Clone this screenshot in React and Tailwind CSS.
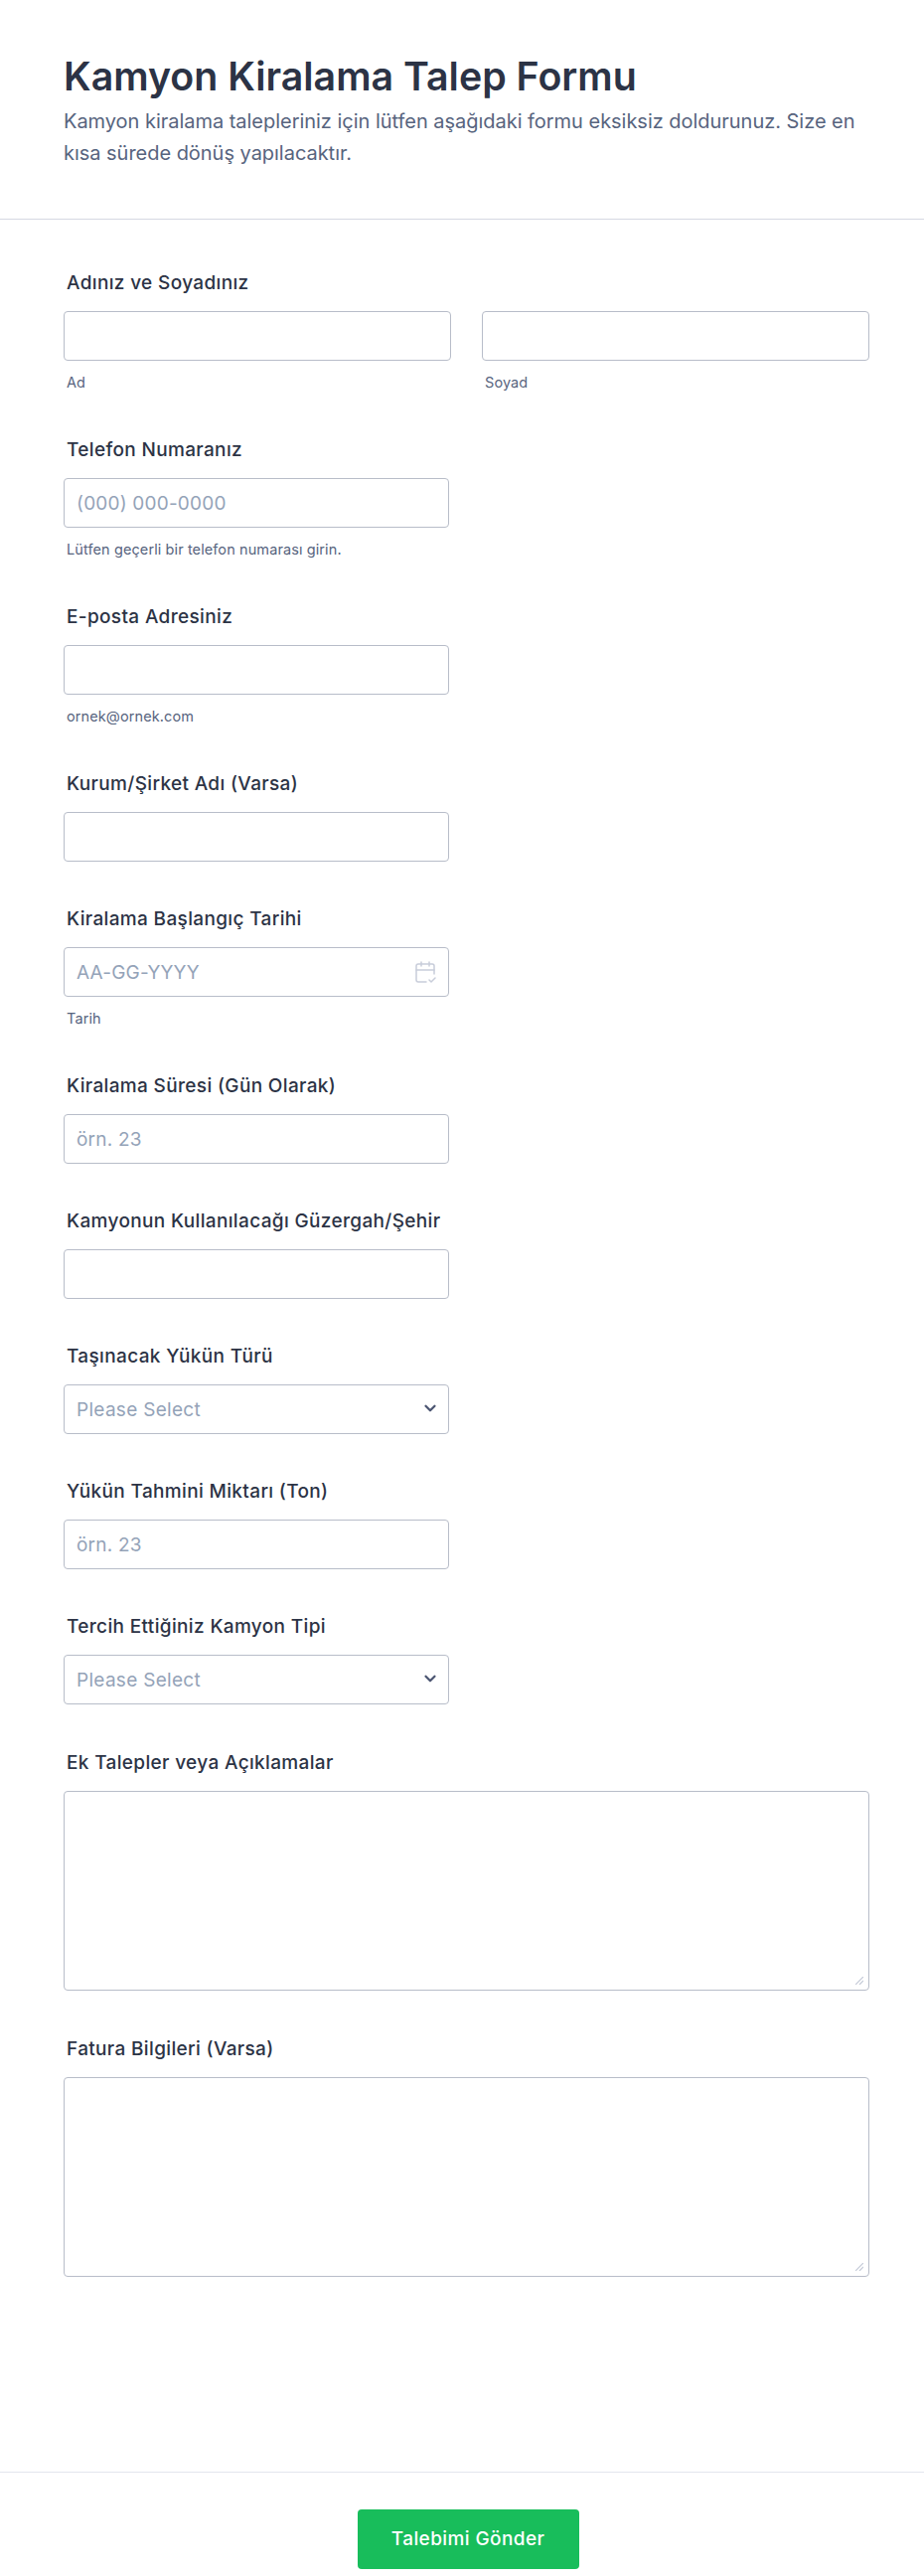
import React from 'react';
import { CalendarCheck2, ChevronDown } from 'lucide-react';

const inputClass = "w-full h-[50px] px-[12px] bg-white border border-[#b8bdc9] rounded-[4px] text-[19px] tracking-[0.2px] text-[#2c3345] placeholder:text-[#94a3b8] outline-none";
const areaClass = 'block w-full h-[201px] bg-white border border-[#b8bdc9] rounded-[4px] outline-none resize-none';

const Label = ({ children }) => (
  <label className="block pl-[3px] mb-[16px] h-[24px] text-[19px] tracking-[0.35px] leading-[24px] font-medium text-[#2c3345]">{children}</label>
);

const Sub = ({ children }) => (
  <p className="pl-[3px] mt-[13px] h-[18px] text-[14.5px] tracking-[0.1px] leading-[18px] text-[#57647e]">{children}</p>
);

const SelectBox = () => (
  <div className="relative w-[388px]">
    <select defaultValue="" className={`${inputClass} pt-[2px] tracking-[0.3px] appearance-none text-[#94a3b8]`}>
      <option value="">Please Select</option>
    </select>
    <ChevronDown size={18} strokeWidth={3} className="absolute right-[10px] top-[15px] text-[#4c5672]" />
  </div>
);

const TextArea = () => (
  <div className="relative">
    <textarea className={areaClass} />
    <svg width="8" height="8" viewBox="0 0 8 8" className="absolute right-[6px] bottom-[6px] text-[#c3c9d6]" stroke="currentColor" strokeWidth="1.2">
      <path d="M0 8 L8 0 M4 8 L8 4" />
    </svg>
  </div>
);

const App = () => {
  return (
    <div className="w-[930px] h-[2592px] bg-white font-['Inter',sans-serif] flex flex-col">
      <header className="h-[221px] px-[64px] pt-[49px] border-b border-[#d5d8e2]">
        <h1 className="text-[39.3px] leading-[56px] font-semibold text-[#2c3345]">Kamyon Kiralama Talep Formu</h1>
        <p className="mt-[1px] text-[20px] leading-[32px] tracking-[-0.03px] text-[#57647e]">
          Kamyon kiralama talepleriniz için lütfen aşağıdaki formu eksiksiz doldurunuz. Size en kısa sürede dönüş yapılacaktır.
        </p>
      </header>

      <form className="flex-1 px-[64px] pt-[52px]">
        <div className="h-[168px]">
          <Label>Adınız ve Soyadınız</Label>
          <div className="grid grid-cols-2 gap-[31px] w-[811px]">
            <div>
              <input className={inputClass} />
              <Sub>Ad</Sub>
            </div>
            <div>
              <input className={inputClass} />
              <Sub>Soyad</Sub>
            </div>
          </div>
        </div>

        <div className="h-[168px] w-[388px]">
          <Label>Telefon Numaranız</Label>
          <input className={inputClass} placeholder="(000) 000-0000" />
          <Sub>Lütfen geçerli bir telefon numarası girin.</Sub>
        </div>

        <div className="h-[168px] w-[388px]">
          <Label>E-posta Adresiniz</Label>
          <input className={inputClass} />
          <Sub>ornek@ornek.com</Sub>
        </div>

        <div className="h-[136px] w-[388px]">
          <Label>Kurum/Şirket Adı (Varsa)</Label>
          <input className={inputClass} />
        </div>

        <div className="h-[168px] w-[388px]">
          <Label>Kiralama Başlangıç Tarihi</Label>
          <div className="relative">
            <input className={inputClass} placeholder="AA-GG-YYYY" />
            <CalendarCheck2 size={24} strokeWidth={1.5} className="absolute right-[12px] top-[13px] text-[#c8cdda]" />
          </div>
          <Sub>Tarih</Sub>
        </div>

        <div className="h-[136px] w-[388px]">
          <Label>Kiralama Süresi (Gün Olarak)</Label>
          <input className={inputClass} placeholder="örn. 23" />
        </div>

        <div className="h-[136px] w-[388px]">
          <Label>Kamyonun Kullanılacağı Güzergah/Şehir</Label>
          <input className={inputClass} />
        </div>

        <div className="h-[136px]">
          <Label>Taşınacak Yükün Türü</Label>
          <SelectBox />
        </div>

        <div className="h-[136px] w-[388px]">
          <Label>Yükün Tahmini Miktarı (Ton)</Label>
          <input className={inputClass} placeholder="örn. 23" />
        </div>

        <div className="h-[137px]">
          <Label>Tercih Ettiğiniz Kamyon Tipi</Label>
          <SelectBox />
        </div>

        <div className="h-[288px] w-[811px]">
          <Label>Ek Talepler veya Açıklamalar</Label>
          <TextArea />
        </div>

        <div className="w-[811px]">
          <Label>Fatura Bilgileri (Varsa)</Label>
          <TextArea />
        </div>
      </form>

      <footer className="h-[105px] border-t border-[#e3e5ee] pt-[37px] pl-[12px] flex justify-center">
        <button type="button" className="w-[223px] h-[60px] rounded-[4px] bg-[#18bd5b] text-white text-[19px] tracking-[0.4px] font-medium">
          Talebimi Gönder
        </button>
      </footer>
    </div>
  );
};

export default App;
